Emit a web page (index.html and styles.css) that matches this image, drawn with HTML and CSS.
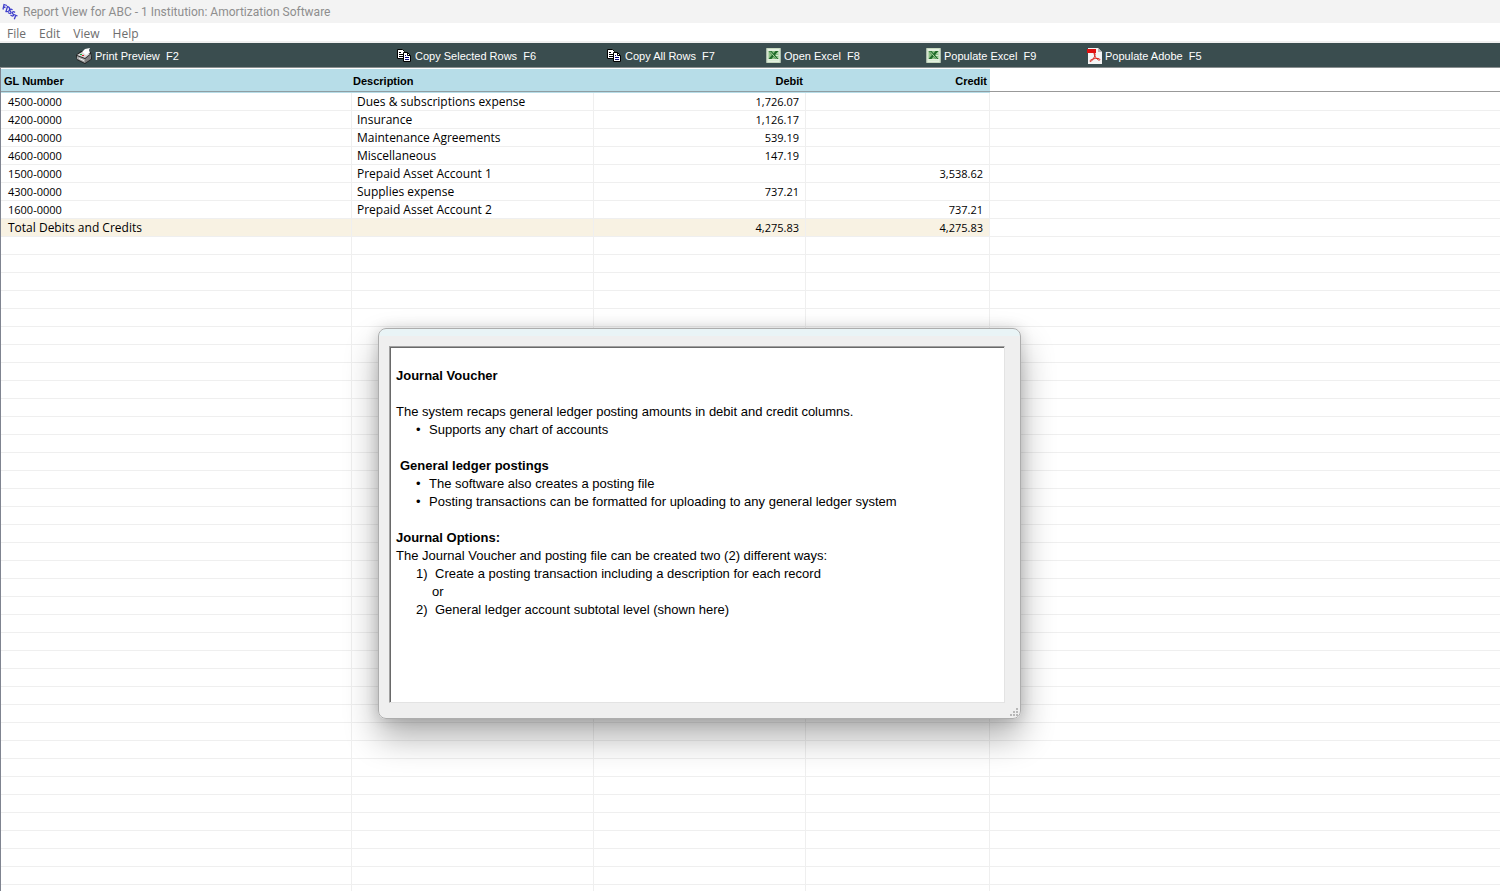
FILE: index.html
```html
<!DOCTYPE html>
<html lang="en">
<head>
	<meta charset="UTF-8">
	<title>Report View</title>
	<link rel="stylesheet" href="styles.css">
</head>
<body>
	<!-- shared icons -->
	<svg class="defs">
		<symbol id="copy" viewBox="0 0 15 14">
			<path d="M0.500 0.500h5l2 2v7h-7z" fill="#fff" stroke="#000"/>
			<path d="M2 3.500h2M2 5.500h4M2 7.500h4" stroke="#000"/>
			<path d="M6.500 3.500h4l3 3v6h-7z" fill="#fff" stroke="#000"/>
			<path d="M10.500 3.500v3h3" fill="none" stroke="#000"/>
			<path d="M8 6.500h1M8 8.500h4M8 10.500h4" stroke="#000080"/>
		</symbol>
		<symbol id="excel" viewBox="0 0 14 15">
			<path d="M0 0h14v15H0z" fill="#e4f0e0"/>
			<path d="M0.500 0.500h13v14H0.500z" fill="none" stroke="#c5d8bf"/>
			<path d="M2 3h10v8H2z" fill="#8cbf86"/>
			<path d="M9 5h3M9 7.500h3M9 10h3M2 12.500h10" stroke="#d7ecd2"/>
			<path d="M2 3h3l2 2.500L9 3h3L8.500 7l3.500 4H9L7 8.500 5 11H2l3.500-4z" fill="#1f6b2a"/>
			<path d="M3.500 3.500l6.500 7.500" stroke="#a8d5a0"/>
		</symbol>
	</svg>

	<header class="titlebar">
		<svg class="logo" viewBox="0 0 16 17" width="16" height="17">
			<g fill="none" stroke="#4040cc" stroke-width="1.300">
				<path d="M1 6.500l1-5 3 1M1.500 4l2 0.500"/>
				<path d="M5.500 3.500l-1.500 5c4 1 5-4 1.500-5z"/>
				<path d="M10.500 7c-2-2-3.500 0-2 1.500s0 3-2.500 1"/>
				<path d="M13 9.500c-2-2-3.500 0-2 1.500s0 3-2.500 1"/>
				<path d="M12 11.500l3.500 1.500M13.800 12.200l-1.500 4"/>
			</g>
		</svg>
		<span>Report View for ABC - 1 Institution: Amortization Software</span>
	</header>

	<nav class="menu">
		<button>File</button>
		<button>Edit</button>
		<button>View</button>
		<button>Help</button>
	</nav>

	<div class="toolbar">
		<button>
			<svg width="16" height="16" viewBox="0 0 16 16">
				<path d="M0 7l5-4 10 1 1 7-7 5-8-4z" fill="#222"/>
				<path d="M1 7l5-3 8 2-5 4z" fill="#d8d8d8"/>
				<path d="M1 8l8 3v4l-8-4z" fill="#a8a8a8"/>
				<path d="M9 11l6-5v5l-6 4z" fill="#808080"/>
				<path d="M6 4l3-3 5-1-1 2 1 3-4 2z" fill="#fff"/>
				<path d="M3 10.500l5 2" stroke="#eee"/>
				<path d="M4 6h2v1H4z" fill="#20b040"/>
				<path d="M6 7h2v1H6z" fill="#e02020"/>
			</svg>
			<span>Print Preview&nbsp; F2</span>
		</button>
		<button><svg width="15" height="14"><use href="#copy"/></svg><span>Copy Selected Rows&nbsp; F6</span></button>
		<button><svg width="15" height="14"><use href="#copy"/></svg><span>Copy All Rows&nbsp; F7</span></button>
		<button><svg width="15" height="15"><use href="#excel"/></svg><span>Open Excel&nbsp; F8</span></button>
		<button><svg width="15" height="15"><use href="#excel"/></svg><span>Populate Excel&nbsp; F9</span></button>
		<button>
			<svg width="15" height="16" viewBox="0 0 15 16">
				<path d="M1 0h10l4 4v12H1z" fill="#f4f4f4"/>
				<path d="M11 0v4h4z" fill="#bbb"/>
				<path d="M0 1h9v4H0z" fill="#e01010"/>
				<path d="M7 5c2 0 1 3-0.500 5.500S3 14.500 3 13s5-3 8-2.500 2 2 0.500 1.500S7 8 7 5z" fill="none" stroke="#d82018"/>
			</svg>
			<span>Populate Adobe&nbsp; F5</span>
		</button>
	</div>

	<main class="report">
		<table>
			<colgroup>
				<col class="col-gl"><col class="col-desc"><col class="col-debit"><col class="col-credit"><col>
			</colgroup>
			<thead>
				<tr><th>GL Number</th><th>Description</th><th class="num">Debit</th><th class="num">Credit</th><td></td></tr>
			</thead>
			<tbody id="rows">
				<tr><td>4500-0000</td><td class="name">Dues &amp; subscriptions expense</td><td class="num">1,726.07</td><td></td><td></td></tr>
				<tr><td>4200-0000</td><td class="name">Insurance</td><td class="num">1,126.17</td><td></td><td></td></tr>
				<tr><td>4400-0000</td><td class="name">Maintenance Agreements</td><td class="num">539.19</td><td></td><td></td></tr>
				<tr><td>4600-0000</td><td class="name">Miscellaneous</td><td class="num">147.19</td><td></td><td></td></tr>
				<tr><td>1500-0000</td><td class="name">Prepaid Asset Account 1</td><td></td><td class="num">3,538.62</td><td></td></tr>
				<tr><td>4300-0000</td><td class="name">Supplies expense</td><td class="num">737.21</td><td></td><td></td></tr>
				<tr><td>1600-0000</td><td class="name">Prepaid Asset Account 2</td><td></td><td class="num">737.21</td><td></td></tr>
				<tr class="total"><td class="name">Total Debits and Credits</td><td></td><td class="num">4,275.83</td><td class="num">4,275.83</td><td></td></tr>
			</tbody>
		</table>
	</main>

	<section class="popup" role="dialog" aria-labelledby="popupTitle">
		<div class="note">
			<h2 id="popupTitle">Journal Voucher</h2>
			<br>
			<p>The system recaps general ledger posting amounts in debit and credit columns.</p>
			<ul>
				<li>Supports any chart of accounts</li>
			</ul>
			<br>
			<h2 class="indent">General ledger postings</h2>
			<ul>
				<li>The software also creates a posting file</li>
				<li>Posting transactions can be formatted for uploading to any general ledger system</li>
			</ul>
			<br>
			<h2>Journal Options:</h2>
			<p>The Journal Voucher and posting file can be created two (2) different ways:</p>
			<ol>
				<li>Create a posting transaction including a description for each record
					<div class="or">or</div>
				</li>
				<li>General ledger account subtotal level (shown here)</li>
			</ol>
		</div>
		<svg class="grip" width="9" height="9" viewBox="0 0 9 9">
			<path d="M6 0h2v2H6zM3 3h2v2H3zM6 3h2v2H6zM0 6h2v2H0zM3 6h2v2H3zM6 6h2v2H6z" fill="#b8b8b8"/>
		</svg>
	</section>

	<script>
		// fill the rest of the window with blank grid rows
		var rows = document.getElementById("rows");
		while (rows.getBoundingClientRect().bottom < window.innerHeight) {
			var tr = rows.insertRow();
			for (var i = 0; i < 5; i++) {
				tr.insertCell();
			}
		}
	</script>
</body>
</html>
```
FILE: styles.css
```css
* {
	box-sizing: border-box;
}
body {
	margin: 0;
	height: 100vh;
	overflow: hidden;
	display: flex;
	flex-direction: column;
	background: #fff;
	color: #000;
	font: 11px/18px "Open Sans", sans-serif;
}
button {
	padding: 0;
	border: 0;
	background: none;
	font: inherit;
	color: inherit;
}
.defs {
	display: none;
}

/* window title and menu */
.titlebar {
	display: flex;
	align-items: center;
	gap: 5px;
	height: 23px;
	flex: none;
	padding-left: 2px;
	background: #f3f3f3;
	color: #8e8e8e;
	font: 12px/18px Roboto, sans-serif;
}
.menu {
	display: flex;
	flex: none;
	gap: 13px;
	height: 20px;
	padding: 2px 0 0 7px;
	border-bottom: 2px solid #f0f0f0;
	color: #6d6d6d;
	font-size: 12px;
}

.toolbar {
	display: grid;
	grid-template-columns: 321px 210px 159px 160px 161px 1fr;
	flex: none;
	height: 25px;
	padding: 1px 0 0 76px;
	background: #3a4d4f;
	border-bottom: 1px solid #8a8f90;
	color: #fff;
	font: 11px/22px "Liberation Sans", Arial, sans-serif;
}
.toolbar button {
	display: flex;
	align-items: center;
	gap: 3px;
	white-space: nowrap;
}

/* report grid */
.report {
	flex: 1;
	min-height: 0;
	overflow: hidden;
	padding-top: 1px;
	border-left: 1px solid #7f8490;
}
table {
	width: 100%;
	table-layout: fixed;
	border-collapse: separate;
	border-spacing: 0;
}
.col-gl {
	width: 351px;
}
.col-desc {
	width: 242px;
}
.col-debit {
	width: 212px;
}
.col-credit {
	width: 184px;
}
thead th {
	height: 24px;
	padding: 0 3px 0 1px;
	background: #b7dde8;
	border-bottom: 1px solid #b7dde8;
	box-shadow: inset 0 -1px #8f9ea3;
	text-align: left;
	font: bold 11px/22px "Liberation Sans", Arial, sans-serif;
}
thead th:first-child {
	padding-left: 3px;
}
thead td {
	border-bottom: 1px solid #fff;
	box-shadow: inset 0 -1px #999;
}
tbody td {
	height: 18px;
	padding: 0 6px 0 5px;
	line-height: 17px;
	border-right: 1px solid #efefef;
	border-bottom: 1px solid #efefef;
	white-space: nowrap;
}
tbody td:first-child {
	padding-left: 7px;
}
tbody td:last-child {
	border-right: 0;
}
tbody .name {
	font-size: 12px;
}
th.num,
td.num {
	text-align: right;
}
.total td:not(:last-child) {
	background: #f8f2e3;
}

/* floating note window */
.popup {
	position: absolute;
	left: 378px;
	top: 328px;
	width: 643px;
	height: 391px;
	padding: 17px 15px 15px 10px;
	background: linear-gradient(#e9f4f6 7px, #efefef 7px);
	border: 1px solid #adadad;
	border-radius: 8px;
	box-shadow: 0 18px 34px rgba(0, 0, 0, .32), 0 0 14px rgba(0, 0, 0, .14);
}
.note {
	height: 100%;
	padding: 20px 6px;
	background: #fff;
	border: 1px solid #a0a0a0;
	border-right-color: #e3e3e3;
	border-bottom-color: #e3e3e3;
	box-shadow: inset 1px 1px #696969;
	font: 13px/18px "Liberation Sans", Arial, sans-serif;
}
.note h2,
.note p {
	margin: 0;
	font-size: 13px;
}
.note .indent {
	padding-left: 4px;
}
.note ul,
.note ol {
	margin: 0;
	padding-left: 20px;
	list-style: none;
}
.note ol {
	counter-reset: option;
}
.note ul li::before {
	content: "•";
	display: inline-block;
	width: 13px;
}
.note ol li {
	counter-increment: option;
}
.note ol li::before {
	content: counter(option) ")";
	display: inline-block;
	width: 19px;
}
.note .or {
	padding-left: 16px;
}
.grip {
	position: absolute;
	right: 1px;
	bottom: 1px;
}
```
